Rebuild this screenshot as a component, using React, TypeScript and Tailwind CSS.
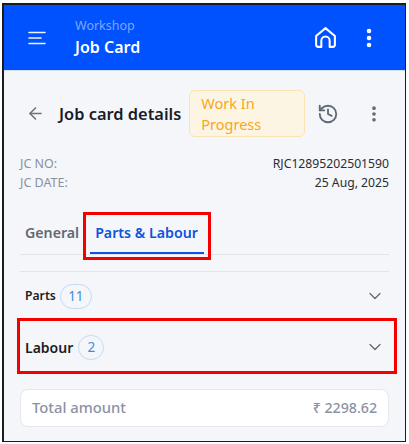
import { ArrowLeft, ChevronDown, EllipsisVertical, History } from 'lucide-react';

function CountBadge({ value, wide }: { value: number; wide?: boolean }) {
  return (
    <span
      className={`flex h-[25px] items-center justify-center rounded-full border border-[#bfdcf7] text-[13.5px] text-[#3b8fe0] ${wide ? 'w-[32px]' : 'w-[26px]'}`}
    >
      {value}
    </span>
  );
}

export default function App() {
  return (
    <div className="h-[444px] w-[409px] bg-white pt-[3px] pl-[2px] font-['Noto_Sans',sans-serif]">
      <div className="h-[439px] w-[404px] overflow-hidden border-t-2 border-r border-b border-l-2 border-[#1c1c1c] bg-[#f5f6fa]">
        <header className="flex h-[66px] items-center border-b border-[#cfe0f7] bg-[#0052fe] pr-[24px] pl-[24px] text-white">
          <svg width="18" height="14" viewBox="0 0 18 14" fill="none" stroke="#eef3ff" strokeWidth="1.6" strokeLinecap="round">
            <path d="M1 1.5h16M1 7h12M1 12.5h16" />
          </svg>
          <div className="ml-[29px] flex-1">
            <div className="text-[12.5px] leading-[18px] text-[#7ea6fb]">Workshop</div>
            <div className="text-[16px] leading-[24px] font-semibold">Job Card</div>
          </div>
          <svg width="25" height="25" viewBox="0 0 24 24" fill="none" stroke="currentColor" strokeWidth="2" strokeLinejoin="round">
            <path d="M3 10.5 12 3l9 7.5V19a2 2 0 0 1-2 2h-3v-6a4 4 0 0 0-8 0v6H5a2 2 0 0 1-2-2z" />
          </svg>
          <EllipsisVertical size={24} strokeWidth={2.6} className="ml-[19px]" />
        </header>

        <section className="px-[16px]">
          <div className="mt-[19px] flex items-center">
            <ArrowLeft size={19} strokeWidth={2} className="ml-[6px] text-[#6b7280]" />
            <h1 className="ml-[14px] translate-y-[1px] text-[16.4px] font-semibold whitespace-nowrap text-[#1a1d23]">Job card details</h1>
            <div className="ml-[8px] h-[47px] w-[116px] shrink-0 rounded-[6px] border border-[#fbe3b2] bg-[#fdf5e3] px-[11px] pt-[2px] text-[14.5px] leading-[21px] text-[#f9a61a]">
              Work In Progress
            </div>
            <History size={22} strokeWidth={2} className="ml-[12px] shrink-0 text-[#5f6875]" />
            <EllipsisVertical size={20} strokeWidth={2.4} className="ml-[25px] shrink-0 text-[#5f6875]" />
          </div>

          <dl className="mt-[17px] text-[12.5px] leading-[19px]">
            <div className="flex justify-between">
              <dt className="text-[#8a929e]">JC NO:</dt>
              <dd className="text-[12.2px] text-[#2a2d33]">RJC12895202501590</dd>
            </div>
            <div className="flex justify-between">
              <dt className="text-[#8a929e]">JC DATE:</dt>
              <dd className="text-[12.2px] text-[#2a2d33]">25 Aug, 2025</dd>
            </div>
          </dl>

          <div className="mt-[18px] flex h-[45px] items-start border-b border-[#e2e4e9] pl-[5px] text-[14.2px] font-semibold">
            <span className="mt-[12px] pr-[4px] text-[#5f6875]">General</span>
            <div className="relative mt-[2px] flex h-[48px] items-center border-[3px] border-[#f50000] pr-[10px] pb-[6px] pl-[9px] whitespace-nowrap text-[#0d52e0]">
              Parts &amp; Labour
              <span className="absolute right-[4px] bottom-[3px] left-[4px] h-[2px] bg-[#0d52e0]" />
            </div>
          </div>

          <div className="mt-[16px] flex h-[47px] items-center border-t border-[#e2e4e9] pt-[2px] pr-[4px] pl-[5px]">
            <span className="text-[12.2px] font-semibold text-[#1a1d23]">Parts</span>
            <span className="ml-[4px]">
              <CountBadge value={11} wide />
            </span>
            <ChevronDown size={20} strokeWidth={1.5} className="ml-auto text-[#5f6875]" />
          </div>

          <div className="-ml-[3px] flex h-[56px] w-[380px] items-center border-[3px] border-[#f50000] pt-[2px] pr-[9px] pl-[5px]">
            <span className="text-[14px] font-semibold text-[#1a1d23]">Labour</span>
            <span className="ml-[5px]">
              <CountBadge value={2} />
            </span>
            <ChevronDown size={20} strokeWidth={1.5} className="ml-auto text-[#5f6875]" />
          </div>

          <div className="mt-[15px] flex h-[38px] items-center justify-between rounded-[8px] border border-[#e6e8ee] bg-white px-[11px] pb-[1px] font-medium text-[#8a93a3]">
            <span className="text-[14.8px]">Total amount</span>
            <span className="text-[14.2px]">₹ 2298.62</span>
          </div>
        </section>
      </div>
    </div>
  );
}
